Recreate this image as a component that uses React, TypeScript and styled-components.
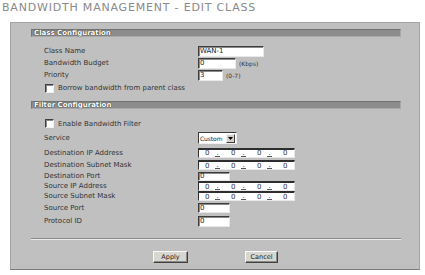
import styled, { createGlobalStyle } from 'styled-components';

const GlobalStyle = createGlobalStyle`
  html, body {
    margin: 0;
    padding: 0;
    background: #ffffff;
  }
  body {
    font-family: "DejaVu Sans", Verdana, sans-serif;
  }
`;

const StyledPage = styled.div`
  width: 425px;
  height: 275px;
  overflow: hidden;
`;

const StyledTitle = styled.h1`
  margin: 0;
  padding: 1px 0 0 2px;
  height: 22px;
  box-sizing: border-box;
  font-size: 11px;
  line-height: 13px;
  font-weight: normal;
  letter-spacing: 0.8px;
  color: #8a8a8a;
`;

const StyledPanel = styled.div`
  margin-left: 10px;
  width: 410px;
  height: 248px;
  box-sizing: border-box;
  background: #c0c0c0;
  border: 1px solid #a4a4a4;
  border-bottom-color: #7c7c7c;
  padding: 6px 0 0 20px;
  display: flex;
  flex-direction: column;
`;

const StyledBar = styled.div<{ $mt: number }>`
  margin-top: ${({ $mt }) => $mt}px;
  width: 370px;
  height: 8px;
  box-sizing: border-box;
  background: #8c8c8c;
  border: 1px solid #737373;
  border-bottom-color: #a8a8a8;
  border-right-color: #a8a8a8;
  padding-left: 2px;
  font-size: 7px;
  line-height: 6px;
  font-weight: bold;
  color: #ffffff;
  text-shadow: 0 0 1px #333, 0 0 1px #333;
  white-space: nowrap;
`;

const StyledRows = styled.div<{ $mt: number }>`
  margin-top: ${({ $mt }) => $mt}px;
  padding-left: 13px;
  display: flex;
  flex-direction: column;
`;

const StyledRow = styled.div<{ $h: number }>`
  height: ${({ $h }) => $h}px;
  display: grid;
  grid-template-columns: 154px auto;
  align-items: center;
`;

const StyledLabel = styled.span`
  font-size: 7px;
  color: #333333;
  white-space: nowrap;
`;

const StyledField = styled.div`
  display: flex;
  align-items: center;
  gap: 3px;
`;

const StyledInput = styled.input<{ $w: number; $h: number }>`
  width: ${({ $w }) => $w}px;
  height: ${({ $h }) => $h}px;
  box-sizing: border-box;
  margin: 0;
  padding: 0 1px;
  background: #ffffff;
  border: 1px solid;
  border-color: #3c3c3c #e8e8e8 #e8e8e8 #3c3c3c;
  box-shadow: inset 1px 1px 0 #8a8a8a;
  font-family: "DejaVu Sans", Verdana, sans-serif;
  font-size: 7px;
  color: #222;
  outline: none;
`;

const StyledUnit = styled.span`
  font-size: 6px;
  color: #333;
`;

const StyledCheckRow = styled.div<{ $h: number }>`
  height: ${({ $h }) => $h}px;
  display: flex;
  align-items: center;
  gap: 4px;
  padding-left: 1px;
`;

const StyledCheckbox = styled.span`
  width: 9px;
  height: 9px;
  box-sizing: border-box;
  background: #ffffff;
  border: 1px solid;
  border-color: #404040 #f0f0f0 #f0f0f0 #404040;
  box-shadow: inset 1px 1px 0 #8a8a8a;
`;

const StyledSelect = styled.div`
  width: 39px;
  height: 12px;
  box-sizing: border-box;
  background: #ffffff;
  border: 1px solid;
  border-color: #3c3c3c #f0f0f0 #f0f0f0 #3c3c3c;
  display: flex;
  align-items: center;
  justify-content: space-between;
  padding: 0 1px;
  font-size: 6px;
  letter-spacing: -0.1px;
  color: #222;
  overflow: hidden;
`;

const StyledArrow = styled.span`
  flex: none;
  width: 9px;
  height: 9px;
  box-sizing: border-box;
  background: #d4d0c8;
  border: 1px solid;
  border-color: #f4f4f4 #404040 #404040 #f4f4f4;
  display: flex;
  align-items: center;
  justify-content: center;
`;

const StyledIpBox = styled.div`
  width: 97px;
  height: 10px;
  box-sizing: border-box;
  background: #ffffff;
  border: 1px solid;
  border-color: #2e2e2e #e8e8e8 #e8e8e8 #2e2e2e;
  border-top-width: 2px;
  display: flex;
  align-items: center;
  font-size: 7px;
  color: #333;
`;

const StyledOctet = styled.span`
  width: 14px;
  padding-left: 6px;
  box-sizing: border-box;
`;

const StyledDot = styled.span`
  width: 12px;
  padding-left: 2px;
  box-sizing: border-box;
  line-height: 6px;
  & > span {
    display: inline-block;
    border-bottom: 1px solid #555;
    width: 5px;
    text-align: center;
  }
`;

const StyledGroove = styled.div`
  margin-top: 11px;
  width: 370px;
  height: 2px;
  box-sizing: border-box;
  border-top: 1px solid #8a8a8a;
  border-bottom: 1px solid #ececec;
`;

const StyledActions = styled.div`
  margin-top: 11px;
  display: flex;
  padding-left: 122px;
  gap: 57px;
`;

const StyledButton = styled.button<{ $w: number }>`
  width: ${({ $w }) => $w}px;
  height: 12px;
  box-sizing: border-box;
  margin: 0;
  padding: 0;
  background: #d8d6d0;
  border: 1px solid;
  border-color: #f8f8f8 #404040 #404040 #f8f8f8;
  box-shadow: inset -1px -1px 0 #8a8a8a;
  font-family: "DejaVu Sans", Verdana, sans-serif;
  font-size: 6.5px;
  color: #222;
`;

type Row =
  | { kind: 'text'; label: string; h: number; w: number; ih: number; value: string; unit?: string }
  | { kind: 'ip'; label: string; h: number }
  | { kind: 'select'; label: string; h: number; value: string }
  | { kind: 'check'; label: string; h: number };

const classRows: Row[] = [
  { kind: 'text', label: 'Class Name', h: 12, w: 66, ih: 11, value: 'WAN-1' },
  { kind: 'text', label: 'Bandwidth Budget', h: 12, w: 38, ih: 11, value: '0', unit: '(Kbps)' },
  { kind: 'text', label: 'Priority', h: 12, w: 25, ih: 11, value: '3', unit: '(0-7)' },
  { kind: 'check', label: 'Borrow bandwidth from parent class', h: 14 },
];

const filterRows: Row[] = [
  { kind: 'check', label: 'Enable Bandwidth Filter', h: 13 },
  { kind: 'select', label: 'Service', h: 16, value: 'Custom' },
  { kind: 'ip', label: 'Destination IP Address', h: 13 },
  { kind: 'ip', label: 'Destination Subnet Mask', h: 12 },
  { kind: 'text', label: 'Destination Port', h: 10, w: 32, ih: 9, value: '0' },
  { kind: 'ip', label: 'Source IP Address', h: 10 },
  { kind: 'ip', label: 'Source Subnet Mask', h: 10 },
  { kind: 'text', label: 'Source Port', h: 14, w: 32, ih: 10, value: '0' },
  { kind: 'text', label: 'Protocol ID', h: 12, w: 32, ih: 11, value: '0' },
];

const IpField = () => (
  <StyledIpBox>
    {[0, 1, 2, 3].map((i) => (
      <span key={i} style={{ display: 'contents' }}>
        <StyledOctet>0</StyledOctet>
        {i < 3 && (
          <StyledDot>
            <span>.</span>
          </StyledDot>
        )}
      </span>
    ))}
  </StyledIpBox>
);

const FormRow = ({ row }: { row: Row }) => {
  if (row.kind === 'check') {
    return (
      <StyledCheckRow $h={row.h}>
        <StyledCheckbox />
        <StyledLabel>{row.label}</StyledLabel>
      </StyledCheckRow>
    );
  }
  return (
    <StyledRow $h={row.h}>
      <StyledLabel>{row.label}</StyledLabel>
      <StyledField>
        {row.kind === 'text' && (
          <>
            <StyledInput $w={row.w} $h={row.ih} defaultValue={row.value} readOnly />
            {row.unit && <StyledUnit>{row.unit}</StyledUnit>}
          </>
        )}
        {row.kind === 'ip' && <IpField />}
        {row.kind === 'select' && (
          <StyledSelect>
            <span>{row.value}</span>
            <StyledArrow>
              <svg width="5" height="3" viewBox="0 0 5 3">
                <path d="M0 0h5L2.5 3z" fill="#000" />
              </svg>
            </StyledArrow>
          </StyledSelect>
        )}
      </StyledField>
    </StyledRow>
  );
};

export default function App() {
  return (
    <StyledPage>
      <GlobalStyle />
      <StyledTitle>BANDWIDTH MANAGEMENT - EDIT CLASS</StyledTitle>
      <StyledPanel>
        <StyledBar $mt={0}>Class Configuration</StyledBar>
        <StyledRows $mt={8}>
          {classRows.map((r) => (
            <FormRow key={r.label} row={r} />
          ))}
        </StyledRows>
        <StyledBar $mt={6}>Filter Configuration</StyledBar>
        <StyledRows $mt={8}>
          {filterRows.map((r) => (
            <FormRow key={r.label} row={r} />
          ))}
        </StyledRows>
        <StyledGroove />
        <StyledActions>
          <StyledButton $w={35}>Apply</StyledButton>
          <StyledButton $w={33}>Cancel</StyledButton>
        </StyledActions>
      </StyledPanel>
    </StyledPage>
  );
}
